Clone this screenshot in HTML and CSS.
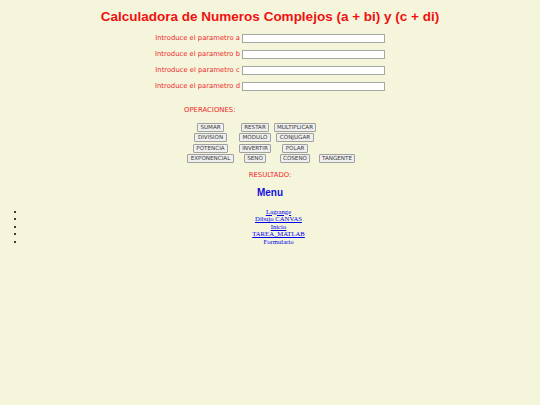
FILE: index.html
```html
<!DOCTYPE html>
<html lang="es">
<head>
<meta charset="utf-8">
<title>Calculadora de Numeros Complejos</title>
<link rel="stylesheet" href="styles.css">
</head>
<body>
<div class="page">
  <h1 class="title">Calculadora de Numeros Complejos (a + bi) y (c + di)</h1>
  <form class="params">
    <div class="param-row"><label class="param-label" for="pa">Introduce el parametro a</label><input class="param-input" id="pa" type="text"></div>
    <div class="param-row"><label class="param-label" for="pb">Introduce el parametro b</label><input class="param-input" id="pb" type="text"></div>
    <div class="param-row"><label class="param-label" for="pc">Introduce el parametro c</label><input class="param-input" id="pc" type="text"></div>
    <div class="param-row"><label class="param-label" for="pd">Introduce el parametro d</label><input class="param-input" id="pd" type="text"></div>
  </form>
  <div class="ops">
    <div class="ops-title">OPERACIONES:</div>
    <div class="ops-grid">
      <div class="cell"><button class="op-btn" type="button">SUMAR</button></div>
      <div class="cell"><button class="op-btn" type="button">RESTAR</button></div>
      <div class="cell"><button class="op-btn" type="button">MULTIPLICAR</button></div>
      <div class="cell"></div>
      <div class="cell"><button class="op-btn" type="button">DIVISION</button></div>
      <div class="cell"><button class="op-btn" type="button">MODULO</button></div>
      <div class="cell"><button class="op-btn" type="button">CONJUGAR</button></div>
      <div class="cell"></div>
      <div class="cell"><button class="op-btn" type="button">POTENCIA</button></div>
      <div class="cell"><button class="op-btn" type="button">INVERTIR</button></div>
      <div class="cell"><button class="op-btn" type="button">POLAR</button></div>
      <div class="cell"></div>
      <div class="cell"><button class="op-btn" type="button">EXPONENCIAL</button></div>
      <div class="cell"><button class="op-btn" type="button">SENO</button></div>
      <div class="cell"><button class="op-btn" type="button">COSENO</button></div>
      <div class="cell"><button class="op-btn" type="button">TANGENTE</button></div>
    </div>
  </div>
  <div class="result">RESULTADO:</div>
  <h2 class="menu-title">Menu</h2>
  <ul class="menu">
    <li><a href="#">Lagrange</a></li>
    <li><a href="#">Dibujo CANVAS</a></li>
    <li><a href="#">Inicio</a></li>
    <li><a href="#">TAREA_MATLAB</a></li>
    <li><a href="#">Formulario</a></li>
  </ul>
</div>
</body>
</html>
```
FILE: styles.css
```css
html, body {
  margin: 0;
  padding: 0;
  background: #f5f5dc;
}
body {
  font-family: "DejaVu Sans", Verdana, sans-serif;
}
.page {
  padding: 0 8px;
}
.title {
  margin: 0;
  padding-top: 9px;
  font: bold 13.5px/16px "Liberation Sans", Arial, sans-serif;
  color: #f01010;
  text-align: center;
}
.params {
  display: flex;
  flex-direction: column;
  align-items: center;
  gap: 7px;
  margin: 9px 0 0;
}
.param-row {
  display: flex;
  align-items: center;
  gap: 2px;
  height: 9px;
}
.param-label {
  font-size: 6.8px;
  line-height: 9px;
  color: #ee2828;
}
.param-input {
  box-sizing: border-box;
  width: 143px;
  height: 9px;
  margin: 0;
  padding: 0;
  border: 1px solid #a8a8a8;
  background: #ffffff;
}
.ops {
  margin: 15px 0 0 176px;
}
.ops-title {
  font-size: 6.9px;
  line-height: 9px;
  color: #ee2828;
}
.ops-grid {
  display: grid;
  grid-template-columns: 47px 42px 38px 46px;
  row-gap: 1.33px;
  margin: 8px 0 0 3px;
}
.cell {
  display: flex;
  justify-content: center;
  height: 9px;
}
.op-btn {
  box-sizing: border-box;
  height: 9px;
  margin: 0;
  padding: 0 2.4px;
  border: 1px solid #a0a0a0;
  border-radius: 1px;
  background: #efefef;
  color: #3a3a3a;
  font-family: "DejaVu Sans", Verdana, sans-serif;
  font-size: 5.6px;
  line-height: 7px;
  white-space: nowrap;
}
.result {
  margin-top: 8px;
  font-size: 6.85px;
  line-height: 9px;
  color: #ee2828;
  text-align: center;
}
.menu-title {
  margin: 7.5px 0 0;
  font: bold 10px/12px "Liberation Sans", Arial, sans-serif;
  color: #1010e0;
  text-align: center;
}
.menu {
  margin: 8.2px 0 0;
  padding-left: 17px;
  font-family: "Liberation Serif", "Times New Roman", serif;
  font-size: 6.7px;
  line-height: 7.55px;
  text-align: center;
}
.menu a {
  color: #0000ee;
}
```
